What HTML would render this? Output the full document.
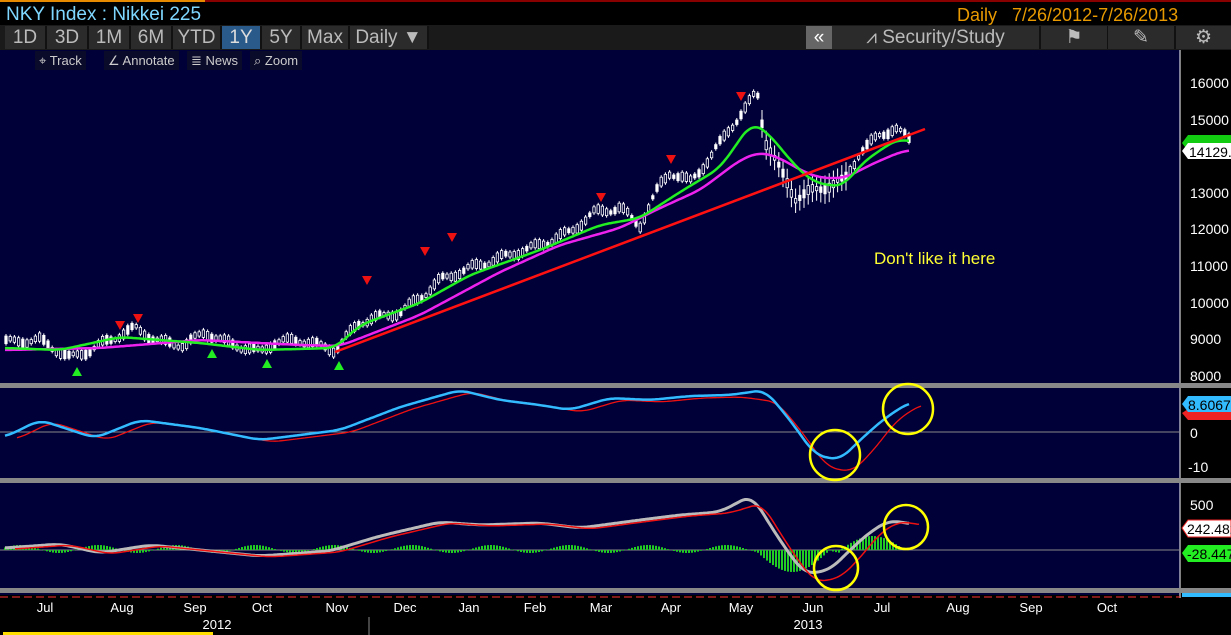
<!DOCTYPE html>
<html><head><meta charset="utf-8"><style>
body{margin:0;width:1231px;height:635px;background:#000;overflow:hidden;font-family:"Liberation Sans",sans-serif;position:relative}
.t{position:absolute;white-space:nowrap}
.btn{position:absolute;top:26px;height:23px;background:#2b2b2b;color:#bbb;font-size:19px;line-height:23px;text-align:center;border-right:2px solid #111}
.sm{position:absolute;top:51px;height:19px;background:#0a0a2a;color:#ccc;font-size:13px;line-height:19px;padding:0 4px}
</style></head><body>
<div style="position:absolute;left:0;top:0;width:205px;height:2px;background:#e88a00"></div>
<div style="position:absolute;left:205px;top:0;width:1026px;height:2px;background:#800"></div>
<div class="t" style="left:6px;top:4px;color:#7fd7ff;font-size:19px">NKY Index : Nikkei 225</div>
<div class="t" style="left:957px;top:5px;color:#e89a00;font-size:18px">Daily &nbsp;&nbsp;7/26/2012-7/26/2013</div>
<div style="position:absolute;left:0;top:25px;width:1231px;height:25px;background:#1a1a1a"></div>
<div class="btn" style="left:5px;width:40px">1D</div>
<div class="btn" style="left:47px;width:40px">3D</div>
<div class="btn" style="left:89px;width:40px">1M</div>
<div class="btn" style="left:131px;width:40px">6M</div>
<div class="btn" style="left:173px;width:47px">YTD</div>
<div class="btn" style="left:222px;width:38px;background:#2a5a8a;color:#ddd">1Y</div>
<div class="btn" style="left:262px;width:38px">5Y</div>
<div class="btn" style="left:302px;width:46px">Max</div>
<div class="btn" style="left:350px;width:77px">Daily ▼</div>
<div class="btn" style="left:806px;width:26px;background:#666;color:#fff">«</div>
<div class="btn" style="left:832px;width:207px">⩘ Security/Study</div>
<div class="btn" style="left:1041px;width:66px">⚑</div>
<div class="btn" style="left:1108px;width:66px">✎</div>
<div class="btn" style="left:1176px;width:55px">⚙</div>
<div style="position:absolute;left:0;top:50px;width:1180px;height:545px;background:#000038"></div>
<div class="sm" style="left:35px">⌖ Track</div>
<div class="sm" style="left:104px">∠ Annotate</div>
<div class="sm" style="left:187px">≣ News</div>
<div class="sm" style="left:250px">⌕ Zoom</div>
<svg id="s" width="1231" height="635" style="position:absolute;left:0;top:0" font-family="Liberation Sans" font-size="14">
<line x1="1180" y1="50" x2="1180" y2="598" stroke="#fff"/>
<rect x="0" y="383" width="1231" height="5" fill="#888"/>
<rect x="0" y="478" width="1231" height="5" fill="#888"/>
<rect x="0" y="588" width="1231" height="5" fill="#888"/>
<line x1="0" y1="432" x2="1180" y2="432" stroke="#888"/>
<line x1="0" y1="550" x2="1180" y2="550" stroke="#888"/>
<line x1="0" y1="597" x2="1180" y2="597" stroke="#f33" stroke-dasharray="8 4"/>
<g fill="#fff">
<text x="1190" y="88">16000</text><text x="1190" y="125">15000</text><text x="1190" y="198">13000</text><text x="1190" y="234">12000</text><text x="1190" y="271">11000</text><text x="1190" y="308">10000</text><text x="1190" y="344">9000</text><text x="1190" y="381">8000</text>
<text x="1190" y="438">0</text><text x="1188" y="472">-10</text><text x="1190" y="510">500</text>
</g>
<polygon points="1182,143 1188,135 1231,135 1231,151 1188,151" fill="#1c1"/>
<polygon points="1182,151 1188,143 1231,143 1231,159 1188,159" fill="#fff"/>
<text x="1189" y="157" fill="#000">14129.9</text>
<polygon points="1182,413 1188,409 1231,409 1231,420 1188,420" fill="#e22"/>
<polygon points="1182,404 1188,396 1231,396 1231,412 1188,412" fill="#3bf"/>
<text x="1188" y="410" fill="#000">8.6067</text>
<polygon points="1182,528 1188,520 1231,520 1231,537 1188,537" fill="#fff" stroke="#e22"/>
<text x="1187" y="534" fill="#000">242.482</text>
<polygon points="1182,553 1188,545 1231,545 1231,562 1188,562" fill="#2e2"/>
<text x="1187" y="559" fill="#000">-28.447</text>
<rect x="1182" y="593" width="49" height="4" fill="#3bf"/>
<g id="cand"></g>
<g id="lines" fill="none" stroke-width="2.5"></g>
<text x="874" y="264" fill="#ff3" font-size="17">Don't like it here</text>
<g fill="none" stroke="#ff0" stroke-width="2.5">
<circle cx="908" cy="409" r="25"/><circle cx="835" cy="455" r="25"/><circle cx="906" cy="527" r="22"/><circle cx="836" cy="568" r="22"/>
</g>
<g fill="#fff" font-size="13" text-anchor="middle">
<text x="45" y="612">Jul</text><text x="122" y="612">Aug</text><text x="195" y="612">Sep</text><text x="262" y="612">Oct</text><text x="337" y="612">Nov</text><text x="405" y="612">Dec</text><text x="469" y="612">Jan</text><text x="535" y="612">Feb</text><text x="601" y="612">Mar</text><text x="671" y="612">Apr</text><text x="741" y="612">May</text><text x="813" y="612">Jun</text><text x="882" y="612">Jul</text><text x="958" y="612">Aug</text><text x="1031" y="612">Sep</text><text x="1107" y="612">Oct</text>
<text x="217" y="629">2012</text><text x="808" y="629">2013</text>
</g>
<line x1="369" y1="617" x2="369" y2="635" stroke="#888"/>
<rect x="3" y="632" width="210" height="3" fill="#fd0"/>
</svg>
<script>
function interp(p,x){for(let i=0;i<p.length-1;i++){if(x>=p[i][0]&&x<=p[i+1][0]){let t=(x-p[i][0])/(p[i+1][0]-p[i][0]);return p[i][1]+t*(p[i+1][1]-p[i][1]);}}return p[p.length-1][1];}
function smooth(p){let out=[];let x0=p[0][0],x1=p[p.length-1][0];for(let x=x0;x<=x1;x+=2){let s=0,n=0;for(let d=-10;d<=10;d+=2){let xx=Math.min(x1,Math.max(x0,x+d));s+=interp(p,xx);n++;}out.push([x,(s/n).toFixed(1)]);}return out;}
function path(p){return "M"+p.map(a=>a.join(",")).join("L");}
const ns="http://www.w3.org/2000/svg";
function add(g,tag,at){let e=document.createElementNS(ns,tag);for(let k in at)e.setAttribute(k,at[k]);g.appendChild(e);return e;}
const price=[[5,342],[40,340],[70,358],[90,350],[120,335],[135,328],[160,342],[185,345],[205,332],[225,342],[260,352],[275,342],[300,340],[335,350],[360,322],[400,312],[420,298],[440,280],[470,268],[500,258],[540,245],[570,232],[595,212],[620,208],[640,225],[660,185],[670,172],[690,182],[710,158],[730,128],[745,110],[757,90],[765,140],[780,170],[795,198],[810,192],[830,185],[845,180],[860,152],[880,135],[895,128],[910,140]];
const green=[[5,348],[60,350],[120,337],[200,343],[260,350],[335,348],[360,325],[420,303],[470,275],[540,250],[600,225],[640,218],[680,192],[720,168],[752,122],[770,135],[790,160],[810,180],[830,186],[845,185],[860,165],[880,150],[900,138],[910,142]];
const mag=[[5,350],[100,348],[200,340],[300,345],[340,346],[420,315],[500,272],[560,245],[620,228],[660,208],[700,190],[740,160],[760,152],[780,158],[800,170],[820,178],[845,178],[870,165],[900,152],[910,150]];
const c=document.getElementById("cand");
for(let x=6;x<=910;x+=4.2){let y=interp(price,x)+(Math.sin(x*1.7)*3);let h=1.5+Math.abs(Math.sin(x*0.9))*3;let col=(x>760&&x<850)?8:0;add(c,"line",{x1:x,y1:y-h-2-col,x2:x,y2:y+h+2+col,stroke:"#fff","stroke-width":1});add(c,"rect",{x:x-1.2,y:y-h,width:2.4,height:2*h,fill:(x*7%3<1)?"#fff":"#000038",stroke:"#fff","stroke-width":0.8});}
const L=document.getElementById("lines");
add(L,"path",{d:path(smooth(mag)),stroke:"#e2e"});
add(L,"path",{d:path(smooth(green)),stroke:"#2e2"});
add(L,"line",{x1:335,y1:352,x2:925,y2:129,stroke:"#f11"});
[[120,326],[138,319],[367,281],[425,252],[452,238],[601,198],[671,160],[741,97]].forEach(p=>add(L,"polygon",{points:`${p[0]-5},${p[1]-5} ${p[0]+5},${p[1]-5} ${p[0]},${p[1]+4}`,fill:"#e11",stroke:"none"}));
[[77,372],[212,354],[267,364],[339,366]].forEach(p=>add(L,"polygon",{points:`${p[0]-5},${p[1]+4} ${p[0]+5},${p[1]+4} ${p[0]},${p[1]-5}`,fill:"#2e2",stroke:"none"}));
const b2=[[5,437],[40,420],[95,438],[140,420],[200,428],[260,440],[340,430],[400,407],[460,390],[500,400],[540,405],[570,410],[610,398],[650,400],[690,396],[730,395],[765,390],[790,420],[815,455],[840,460],[860,440],[885,418],[910,402]];
const r2=b2.map(p=>[p[0]+12,p[1]+(p[0]>760&&p[0]<880?12:2)]);
add(L,"path",{d:path(smooth(r2)),stroke:"#e11","stroke-width":1.3});
add(L,"path",{d:path(smooth(b2)),stroke:"#3bf"});
for(let x=5;x<905;x+=3){let v;if(x>755&&x<830)v=-(Math.sin((x-755)/75*Math.PI))*22;else if(x>840&&x<905)v=Math.sin((x-840)/65*Math.PI)*14;else v=Math.sin(x*0.08)*4+1;add(L,"line",{x1:x,y1:550,x2:x,y2:550-v,stroke:"#2c2","stroke-width":2});}
const w3=[[5,548],[60,544],[100,553],[150,545],[200,550],[260,556],[330,551],[380,536],[440,522],[480,525],[540,523],[580,528],[640,520],[680,515],[720,512],[752,495],[770,525],[790,555],[805,574],[830,570],[850,550],[870,532],[890,520],[910,524]];
add(L,"path",{d:path(smooth(w3)),stroke:"#bbb","stroke-width":3});
add(L,"path",{d:path(smooth(w3.map(p=>[p[0]+10,p[1]+(p[0]>750&&p[0]<870?8:1)]))),stroke:"#e11","stroke-width":1.5});
</script>
</body></html>
